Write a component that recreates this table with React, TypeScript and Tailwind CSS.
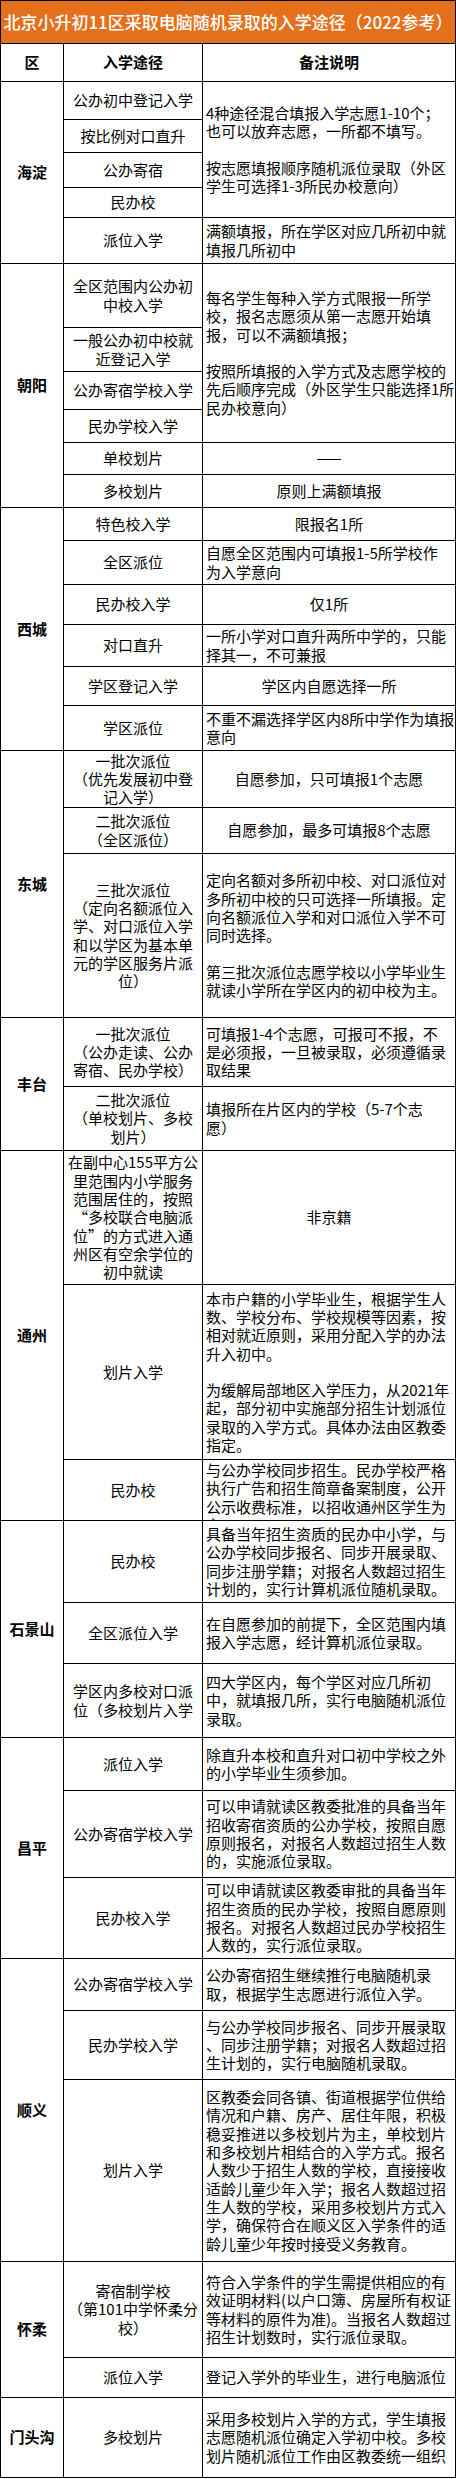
import { Fragment } from "react";

type Row = {
  way: string[];
  note?: string[];
  span?: string;
  center?: boolean;
  top?: boolean;
};

type District = {
  name: string;
  rows: string;
  nameSpan: string;
  items: Row[];
};

const districts: District[] = [
  {
    name: "海淀",
    rows: "grid-rows-[37px_32px_34px_29px_45px]",
    nameSpan: "row-span-5",
    items: [
      {
        way: ["公办初中登记入学"],
        span: "row-span-4",
        note: [
          "4种途径混合填报入学志愿1-10个；",
          "也可以放弃志愿，一所都不填写。",
          "",
          "按志愿填报顺序随机派位录取（外区",
          "学生可选择1-3所民办校意向）",
        ],
      },
      { way: ["按比例对口直升"] },
      { way: ["公办寄宿"] },
      { way: ["民办校"] },
      { way: ["派位入学"], note: ["满额填报，所在学区对应几所初中就", "填报几所初中"] },
    ],
  },
  {
    name: "朝阳",
    rows: "grid-rows-[63px_43px_37px_32px_31px_32px]",
    nameSpan: "row-span-6",
    items: [
      {
        way: ["全区范围内公办初", "中校入学"],
        span: "row-span-4",
        note: [
          "每名学生每种入学方式限报一所学",
          "校，报名志愿须从第一志愿开始填",
          "报，可以不满额填报；",
          "",
          "按照所填报的入学方式及志愿学校的",
          "先后顺序完成（外区学生只能选择1所",
          "民办校意向）",
        ],
      },
      { way: ["一般公办初中校就", "近登记入学"] },
      { way: ["公办寄宿学校入学"] },
      { way: ["民办学校入学"] },
      { way: ["单校划片"], note: ["——"], center: true },
      { way: ["多校划片"], note: ["原则上满额填报"], center: true },
    ],
  },
  {
    name: "西城",
    rows: "grid-rows-[32px_43px_39px_41px_38px_44px]",
    nameSpan: "row-span-6",
    items: [
      { way: ["特色校入学"], note: ["限报名1所"], center: true },
      { way: ["全区派位"], note: ["自愿全区范围内可填报1-5所学校作", "为入学意向"] },
      { way: ["民办校入学"], note: ["仅1所"], center: true },
      { way: ["对口直升"], note: ["一所小学对口直升两所中学的，只能", "择其一，不可兼报"] },
      { way: ["学区登记入学"], note: ["学区内自愿选择一所"], center: true },
      { way: ["学区派位"], note: ["不重不漏选择学区内8所中学作为填报", "意向"] },
    ],
  },
  {
    name: "东城",
    rows: "grid-rows-[56px_45px_163px]",
    nameSpan: "row-span-3",
    items: [
      {
        way: ["一批次派位", "（优先发展初中登", "记入学）"],
        note: ["自愿参加，只可填报1个志愿"],
        center: true,
      },
      { way: ["二批次派位", "（全区派位）"], note: ["自愿参加，最多可填报8个志愿"], center: true },
      {
        way: ["三批次派位", "（定向名额派位入", "学、对口派位入学", "和以学区为基本单", "元的学区服务片派", "位）"],
        note: [
          "定向名额对多所初中校、对口派位对",
          "多所初中校的只可选择一所填报。定",
          "向名额派位入学和对口派位入学不可",
          "同时选择。",
          "",
          "第三批次派位志愿学校以小学毕业生",
          "就读小学所在学区内的初中校为主。",
        ],
      },
    ],
  },
  {
    name: "丰台",
    rows: "grid-rows-[68px_63px]",
    nameSpan: "row-span-2",
    items: [
      {
        way: ["一批次派位", "（公办走读、公办", "寄宿、民办学校）"],
        note: ["可填报1-4个志愿，可报可不报，不", "是必须报，一旦被录取，必须遵循录", "取结果"],
      },
      {
        way: ["二批次派位", "（单校划片、多校", "划片）"],
        note: ["填报所在片区内的学校（5-7个志", "愿）"],
      },
    ],
  },
  {
    name: "通州",
    rows: "grid-rows-[133px_174px_60px]",
    nameSpan: "row-span-3",
    items: [
      {
        way: [
          "在副中心155平方公",
          "里范围内小学服务",
          "范围居住的，按照",
          "“多校联合电脑派",
          "位”的方式进入通",
          "州区有空余学位的",
          "初中就读",
        ],
        note: ["非京籍"],
        center: true,
      },
      {
        way: ["划片入学"],
        note: [
          "本市户籍的小学毕业生，根据学生人",
          "数、学校分布、学校规模等因素，按",
          "相对就近原则，采用分配入学的办法",
          "升入初中。",
          "",
          "为缓解局部地区入学压力，从2021年",
          "起，部分初中实施部分招生计划派位",
          "录取的入学方式。具体办法由区教委",
          "指定。",
        ],
      },
      {
        way: ["民办校"],
        top: true,
        note: [
          "与公办学校同步招生。民办学校严格",
          "执行广告和招生简章备案制度，公开",
          "公示收费标准，以招收通州区学生为",
          "主",
        ],
      },
    ],
  },
  {
    name: "石景山",
    rows: "grid-rows-[81px_60px_73px]",
    nameSpan: "row-span-3",
    items: [
      {
        way: ["民办校"],
        note: [
          "具备当年招生资质的民办中小学，与",
          "公办学校同步报名、同步开展录取、",
          "同步注册学籍；对报名人数超过招生",
          "计划的，实行计算机派位随机录取。",
        ],
      },
      { way: ["全区派位入学"], note: ["在自愿参加的前提下，全区范围内填", "报入学志愿，经计算机派位录取。"] },
      {
        way: ["学区内多校对口派", "位（多校划片入学"],
        note: ["四大学区内，每个学区对应几所初", "中，就填报几所，实行电脑随机派位", "录取。"],
      },
    ],
  },
  {
    name: "昌平",
    rows: "grid-rows-[52px_86px_80px]",
    nameSpan: "row-span-3",
    items: [
      { way: ["派位入学"], note: ["除直升本校和直升对口初中学校之外", "的小学毕业生须参加。"] },
      {
        way: ["公办寄宿学校入学"],
        note: [
          "可以申请就读区教委批准的具备当年",
          "招收寄宿资质的公办学校，按照自愿",
          "原则报名，对报名人数超过招生人数",
          "的，实施派位录取。",
        ],
      },
      {
        way: ["民办校入学"],
        note: [
          "可以申请就读区教委审批的具备当年",
          "招生资质的民办学校，按照自愿原则",
          "报名。对报名人数超过民办学校招生",
          "人数的，实行派位录取。",
        ],
      },
    ],
  },
  {
    name: "顺义",
    rows: "grid-rows-[51px_68px_181px]",
    nameSpan: "row-span-3",
    items: [
      { way: ["公办寄宿学校入学"], note: ["公办寄宿招生继续推行电脑随机录", "取，根据学生志愿进行派位入学。"] },
      {
        way: ["民办学校入学"],
        note: ["与公办学校同步报名、同步开展录取", "、同步注册学籍；对报名人数超过招", "生计划的，实行电脑随机录取。"],
      },
      {
        way: ["划片入学"],
        note: [
          "区教委会同各镇、街道根据学位供给",
          "情况和户籍、房产、居住年限，积极",
          "稳妥推进以多校划片为主，单校划片",
          "和多校划片相结合的入学方式。报名",
          "人数少于招生人数的学校，直接接收",
          "适龄儿童少年入学；报名人数超过招",
          "生人数的学校，采用多校划片方式入",
          "学，确保符合在顺义区入学条件的适",
          "龄儿童少年按时接受义务教育。",
        ],
      },
    ],
  },
  {
    name: "怀柔",
    rows: "grid-rows-[95px_39px]",
    nameSpan: "row-span-2",
    items: [
      {
        way: ["寄宿制学校", "（第101中学怀柔分", "校）"],
        note: [
          "符合入学条件的学生需提供相应的有",
          "效证明材料(以户口簿、房屋所有权证",
          "等材料的原件为准)。当报名人数超过",
          "招生计划数时，实行派位录取。",
        ],
      },
      { way: ["派位入学"], note: ["登记入学外的毕业生，进行电脑派位"] },
    ],
  },
  {
    name: "门头沟",
    rows: "grid-rows-[79px]",
    nameSpan: "row-span-1",
    items: [
      {
        way: ["多校划片"],
        note: [
          "采用多校划片入学的方式，学生填报",
          "志愿随机派位确定入学初中校。多校",
          "划片随机派位工作由区教委统一组织",
        ],
      },
    ],
  },
];

function Lines({ lines }: { lines: string[] }) {
  return (
    <>
      {lines.map((l, i) => (
        <div key={i} className="whitespace-nowrap">
          {l || "\u00a0"}
        </div>
      ))}
    </>
  );
}

function DistrictBlock({ d }: { d: District }) {
  return (
    <div className={`grid grid-cols-[62px_138px_252px] gap-px ${d.rows}`}>
      <div className={`${d.nameSpan} col-start-1 bg-white flex items-center justify-center text-[15px] font-bold`}>
        {d.name}
      </div>
      {d.items.map((r, i) => (
        <Fragment key={i}>
          <div className="col-start-2 bg-white flex flex-col items-center justify-center text-center">
            <Lines lines={r.way} />
          </div>
          {r.note && (
            <div
              className={`col-start-3 ${r.span ?? ""} bg-white flex flex-col px-[3px] overflow-hidden ${
                r.center ? "items-center" : "items-start"
              } ${r.top ? "justify-start pt-px" : "justify-center"}`}
            >
              <Lines lines={r.note} />
            </div>
          )}
        </Fragment>
      ))}
    </div>
  );
}

export default function App() {
  return (
    <div className="w-[456px] bg-white font-['Noto_Sans_CJK_SC',sans-serif] text-[15px] leading-[18.3px] text-black">
      <div className="flex flex-col gap-px bg-black border border-black">
        <div className="h-[42px] bg-[#e4701c] flex items-center justify-center text-white text-[17px] font-medium whitespace-nowrap">
          北京小升初11区采取电脑随机录取的入学途径（2022参考）
        </div>
        <div className="grid grid-cols-[62px_138px_252px] gap-px h-[37px] font-bold">
          <div className="bg-white flex items-center justify-center">区</div>
          <div className="bg-white flex items-center justify-center">入学途径</div>
          <div className="bg-white flex items-center justify-center">备注说明</div>
        </div>
        {districts.map((d) => (
          <DistrictBlock key={d.name} d={d} />
        ))}
      </div>
    </div>
  );
}
